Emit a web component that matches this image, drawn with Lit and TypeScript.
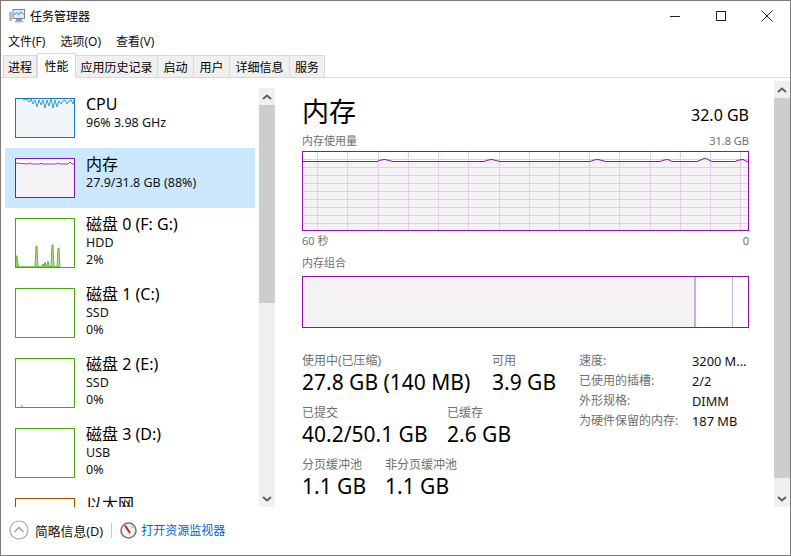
import { LitElement, html, css, svg } from "lit";
import { customElement } from "lit/decorators.js";

const cpuPts = "7,0 9,1 11,0 13,3 15,0 17,5 19,1 21,8 23,1 25,6 27,1 29,9 31,1 33,7 35,0 37,9 39,1 41,8 43,2 45,5 47,2 49,1 51,5 53,2 55,1 57,5 58,1";
const memPts = "0,4 12,5 14,4 16,5 24,5 25,4 26,5 40,5 42,4 44,5 52,5 54,3 56,5 58,5";
const diskPts = "0,48 0,37 1,37 2.5,48 19,48 20,27 21,27 22,48 26,48 27,45 28,47 29,43 30,47 31,47 32,42 33,47 35,48 36,26 37,26 38,48 41,48 42,29 43,29 44,48";

const xs = [14, 44, 75, 105, 135, 165, 196, 226, 256, 286, 316, 347, 377, 407, 437];
const ys = [7, 15, 23, 31, 39, 47, 55, 63, 71];
const line = "0,9 74,9 78,7.5 82,7 86,8 90,9 181,9 185,7.5 189,7 193,8 197,9 287,9 291,7.5 295,7 299,8 303,9 357,9 361,7.5 365,7 369,9 394,9 399,7 402,5.5 405,7 409,9 432,9 436,7.5 440,7 445,9.5";

type Row = { title: string; l1: string; l2?: string; kind: string; selected?: boolean };
const rows: Row[] = [
  { title: "CPU", l1: "96% 3.98 GHz", kind: "cpu" },
  { title: "内存", l1: "27.9/31.8 GB (88%)", kind: "mem", selected: true },
  { title: "磁盘 0 (F: G:)", l1: "HDD", l2: "2%", kind: "disk0" },
  { title: "磁盘 1 (C:)", l1: "SSD", l2: "0%", kind: "disk" },
  { title: "磁盘 2 (E:)", l1: "SSD", l2: "0%", kind: "disk2" },
  { title: "磁盘 3 (D:)", l1: "USB", l2: "0%", kind: "disk" },
  { title: "以太网", l1: "", l2: "", kind: "eth" },
];

const tabs: [string, number][] = [
  ["进程", 34],
  ["性能", 39],
  ["应用历史记录", 82],
  ["启动", 36],
  ["用户", 36],
  ["详细信息", 60],
  ["服务", 35],
];

const chevUp = html`<svg class="chev" viewBox="0 0 10 6"><path d="M1 5 L5 1.5 L9 5" fill="none" stroke="#606060" stroke-width="2"/></svg>`;
const chevDown = html`<svg class="chev" viewBox="0 0 10 6"><path d="M1 1 L5 4.5 L9 1" fill="none" stroke="#606060" stroke-width="2"/></svg>`;

@customElement("app-root")
export class AppRoot extends LitElement {
  static styles = css`
    :host {
      display: flex;
      flex-direction: column;
      box-sizing: border-box;
      width: 791px;
      height: 556px;
      overflow: hidden;
      background: #fff;
      border: 1px solid #7c7c7c;
      font-family: "Noto Sans", "Noto Sans CJK SC", sans-serif;
      color: #000;
    }
    .titlebar { display: flex; align-items: center; height: 29px; flex: none; padding-left: 8px; }
    .appicon { width: 16px; height: 16px; margin-right: 5px; }
    .apptitle { font-size: 12px; flex: 1; }
    .winbtn { width: 46px; height: 29px; display: flex; align-items: center; justify-content: center; }
    .winbtn svg { width: 12px; height: 12px; }
    .menu { display: flex; height: 20px; flex: none; align-items: center; font-size: 12px; padding: 2px 0 0 7px; box-sizing: border-box; gap: 15px; color: #111; }
    .tabs { display: flex; height: 28px; flex: none; align-items: flex-end; padding-left: 2px; box-sizing: border-box; border-bottom: 1px solid #d9d9d9; }
    .tab { height: 23px; flex: none; box-sizing: border-box; margin-bottom: -1px; display: flex; align-items: center; justify-content: center; font-size: 12px; background: #f0f0f0; border: 1px solid #d9d9d9; border-left: none; }
    .tab:first-child { border-left: 1px solid #d9d9d9; }
    .tab.on { height: 25px; background: #fff; border-bottom-color: #fff; border-left: 1px solid #d9d9d9; }
    .main { display: flex; height: 430px; flex: none; }
    .side { width: 258px; flex: none; height: 429px; box-sizing: border-box; padding: 10px 0 0 4px; overflow: hidden; }
    .row { display: flex; width: 250px; box-sizing: border-box; padding: 6px 0 0 10px; height: 70px; }
    .row.short { height: 60px; }
    .row.sel { background: #cce8ff; }
    .thumb { flex: none; width: 60px; height: 50px; margin-top: 4px; margin-right: 11px; box-sizing: border-box; border: 1px solid; display: block; }
    .short .thumb { height: 40px; }
    .cpu { border-color: #117dbb; background: #f1f6fa; }
    .mem { border-color: #8b12ae; background: #f4f2f4; }
    .disk { border-color: #4da60c; background: #fff; }
    .eth { border-color: #a74f01; background: #fff; }
    .rt { font-size: 16px; line-height: 20px; white-space: pre; }
    .rs { font-size: 12.5px; line-height: 17.5px; white-space: pre; color: #111; }
    .rs + .rs { line-height: 16.5px; }
    .bar { width: 16px; flex: none; background: #f0f0f0; display: flex; flex-direction: column; }
    .sbar { height: 419px; margin-top: 10px; }
    .dbar { height: 426px; margin-top: 3px; }
    .arrow { height: 17px; flex: none; display: flex; align-items: center; justify-content: center; }
    .chev { width: 10px; height: 6px; }
    .track { flex: 1; }
    .thumbbar { background: #cdcdcd; flex: none; }
    .detail { flex: none; width: 499px; box-sizing: border-box; padding: 13px 25px 0 27px; }
    .head { display: flex; justify-content: space-between; align-items: center; height: 41px; }
    .h1 { font-size: 27px; line-height: 39px; }
    .cap { font-size: 16px; margin-top: 6px; }
    .lbl { display: flex; justify-content: space-between; font-size: 11px; line-height: 18px; color: #707070; }
    .chart { display: block; width: 447px; height: 80px; box-sizing: border-box; border: 1px solid #8b12ae; background: #fff; margin-top: 1px; }
    .under { height: 20px; line-height: 20px; }
    .l2 { margin-top: 3px; }
    .combo { display: flex; width: 447px; height: 52px; box-sizing: border-box; border: 1px solid #8b12ae; margin-top: 4px; }
    .used { width: 391px; background: #f4f2f4; border-right: 2px solid #ccadd6; }
    .mod { width: 36px; border-right: 1px solid #ccadd6; }
    .stats { display: flex; margin-top: 23px; }
    .left { width: 277px; flex: none; display: flex; flex-direction: column; gap: 9px; }
    .srow { display: flex; }
    .c190 { width: 190px; }
    .c145 { width: 145px; }
    .c83 { width: 83px; }
    .sl { font-size: 12px; line-height: 19px; color: #707070; white-space: nowrap; }
    .sv { font-size: 21px; line-height: 24px; white-space: nowrap; }
    .info { display: grid; grid-template-columns: 113px 57px; grid-auto-rows: 20px; font-size: 12px; line-height: 20px; align-self: start; }
    .ik { color: #707070; white-space: nowrap; }
    .iv { color: #111; white-space: nowrap; overflow: hidden; font-size: 12.8px; }
    .footer { display: flex; align-items: center; flex: 1; padding: 0 0 3px 8px; }
    .fold { width: 20px; height: 20px; margin-right: 6px; }
    .ft { font-size: 12.8px; color: #111; }
    .fsep { width: 1px; height: 15px; background: #c8c8c8; margin: 0 8px 0 8px; }
    .mon { width: 17px; height: 17px; margin-right: 4px; }
    .link { font-size: 12px; color: #0066cc; }
  `;

  private thumb(kind: string) {
    if (kind === "cpu")
      return html`<svg class="thumb cpu" viewBox="0 0 58 38"><polyline points=${cpuPts} fill="none" stroke="#3d97cc" stroke-width="1"/></svg>`;
    if (kind === "mem")
      return html`<svg class="thumb mem" viewBox="0 0 58 38"><rect width="58" height="4" fill="#fff"/><polyline points=${memPts} fill="none" stroke="#9c3dba" stroke-width="1"/></svg>`;
    if (kind === "disk0")
      return html`<svg class="thumb disk" viewBox="0 0 58 48"><polygon points=${diskPts} fill="#b7dd9c" stroke="#4da60c" stroke-width="0.8"/></svg>`;
    if (kind === "disk2")
      return html`<svg class="thumb disk" viewBox="0 0 58 48"><path d="M6 48 V46" stroke="#4da60c" stroke-width="1"/></svg>`;
    if (kind === "eth") return html`<div class="thumb eth"></div>`;
    return html`<div class="thumb disk"></div>`;
  }

  private chart() {
    return html`<svg class="chart" viewBox="0 0 445 78">
      <polygon points="0,9 74,9 78,7.5 82,7 86,8 90,9 181,9 185,7.5 189,7 193,8 197,9 287,9 291,7.5 295,7 299,8 303,9 357,9 361,7.5 365,7 369,9 394,9 399,7 402,5.5 405,7 409,9 432,9 436,7.5 440,7 445,9.5 445,78 0,78" fill="#f4f2f4"/>
      ${xs.map((x) => svg`<rect x=${x} y="0" width="1" height="78" fill="#e3cdea"/>`)}
      ${ys.map((y) => svg`<rect x="0" y=${y} width="445" height="1" fill="#e3cdea"/>`)}
      <polyline points=${line} fill="none" stroke="#8b12ae" stroke-width="1" transform="translate(0 .5)"/>
    </svg>`;
  }

  render() {
    return html`
      <div class="titlebar">
        <svg class="appicon" viewBox="0 0 16 16">
          <rect x="0" y="4" width="3" height="9" fill="#b8bcc0"/>
          <rect x="4" y="1.5" width="11.5" height="9" fill="#dfeaf3" stroke="#7d8a94" stroke-width="1"/>
          <path d="M5 7 L7.5 4.5 L9.5 7 L11.5 4 L14.5 6" fill="none" stroke="#2a8ccb" stroke-width="1"/>
          <rect x="7" y="11" width="6" height="2" fill="#8f989e"/>
          <rect x="5.5" y="13" width="9" height="1.5" fill="#b4babf"/>
        </svg>
        <span class="apptitle">任务管理器</span>
        <div class="winbtn"><svg viewBox="0 0 12 12"><path d="M1 6.5 H11" stroke="#222" stroke-width="1"/></svg></div>
        <div class="winbtn"><svg viewBox="0 0 12 12"><rect x="1.5" y="1.5" width="9" height="9" fill="none" stroke="#222" stroke-width="1"/></svg></div>
        <div class="winbtn"><svg viewBox="0 0 12 12"><path d="M.5 .5 L11.5 11.5 M11.5 .5 L.5 11.5" stroke="#222" stroke-width="1"/></svg></div>
      </div>
      <div class="menu"><span>文件(F)</span><span>选项(O)</span><span>查看(V)</span></div>
      <div class="tabs">
        ${tabs.map(
          ([t, w], i) => html`<div class="tab ${i === 1 ? "on" : ""}" style="width:${w}px">${t}</div>`
        )}
      </div>
      <div class="main">
        <div class="side">
          ${rows.map(
            (r) => html`<div class="row ${r.kind === "cpu" || r.kind === "mem" ? "short" : ""} ${r.selected ? "sel" : ""}">
              ${this.thumb(r.kind)}
              <div>
                <div class="rt">${r.title}</div>
                <div class="rs">${r.l1}</div>
                ${r.l2 ? html`<div class="rs">${r.l2}</div>` : ""}
              </div>
            </div>`
          )}
        </div>
        <div class="bar sbar">
          <div class="arrow">${chevUp}</div>
          <div class="thumbbar" style="height:198px"></div>
          <div class="track"></div>
          <div class="arrow">${chevDown}</div>
        </div>
        <div class="detail">
          <div class="head"><span class="h1">内存</span><span class="cap">32.0 GB</span></div>
          <div class="lbl"><span>内存使用量</span><span>31.8 GB</span></div>
          ${this.chart()}
          <div class="lbl under"><span>60 秒</span><span>0</span></div>
          <div class="lbl l2"><span>内存组合</span></div>
          <div class="combo"><div class="used"></div><div class="mod"></div></div>
          <div class="stats">
            <div class="left">
              <div class="srow">
                <div class="c190"><div class="sl">使用中(已压缩)</div><div class="sv">27.8 GB (140 MB)</div></div>
                <div><div class="sl">可用</div><div class="sv">3.9 GB</div></div>
              </div>
              <div class="srow">
                <div class="c145"><div class="sl">已提交</div><div class="sv">40.2/50.1 GB</div></div>
                <div><div class="sl">已缓存</div><div class="sv">2.6 GB</div></div>
              </div>
              <div class="srow">
                <div class="c83"><div class="sl">分页缓冲池</div><div class="sv">1.1 GB</div></div>
                <div><div class="sl">非分页缓冲池</div><div class="sv">1.1 GB</div></div>
              </div>
            </div>
            <div class="info">
              <span class="ik">速度:</span><span class="iv">3200 M...</span>
              <span class="ik">已使用的插槽:</span><span class="iv">2/2</span>
              <span class="ik">外形规格:</span><span class="iv">DIMM</span>
              <span class="ik">为硬件保留的内存:</span><span class="iv">187 MB</span>
            </div>
          </div>
        </div>
        <div class="bar dbar">
          <div class="arrow">${chevUp}</div>
          <div class="thumbbar" style="height:380px"></div>
          <div class="track"></div>
          <div class="arrow">${chevDown}</div>
        </div>
      </div>
      <div class="footer">
        <svg class="fold" viewBox="0 0 20 20"><circle cx="10" cy="10" r="9" fill="#fff" stroke="#a8a8a8" stroke-width="1.2"/><path d="M5.5 12 L10 7.5 L14.5 12" fill="none" stroke="#a0a0a0" stroke-width="1.4"/></svg>
        <span class="ft">简略信息(D)</span>
        <span class="fsep"></span>
        <svg class="mon" viewBox="0 0 17 17"><circle cx="8.5" cy="8.5" r="7.5" fill="#f4f1ea" stroke="#777" stroke-width="1.6"/><path d="M5 3.5 L10 11" stroke="#c8202a" stroke-width="2"/><path d="M11 4 L13 6" stroke="#999" stroke-width="1"/></svg>
        <span class="link">打开资源监视器</span>
      </div>
    `;
  }
}
